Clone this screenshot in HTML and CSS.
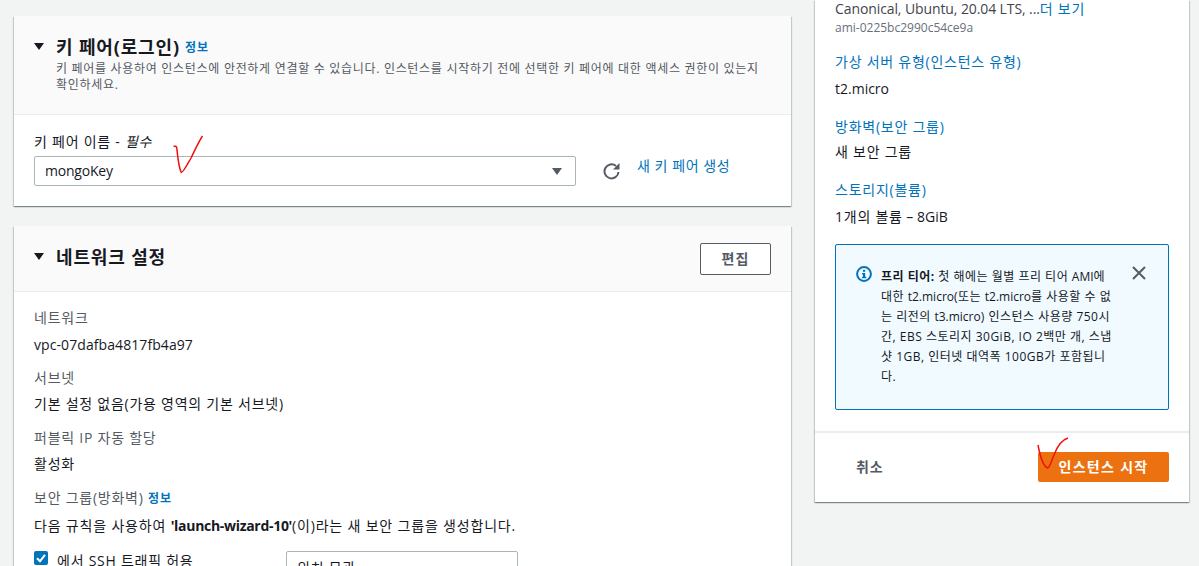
FILE: index.html
```html
<!DOCTYPE html>
<html lang="ko">
<head>
<meta charset="utf-8">
<title>인스턴스 시작</title>
<link rel="stylesheet" href="styles.css">
</head>
<body>
<div class="page">
  <main class="main">
    <section class="card">
      <header class="card-head keypair-head">
        <div class="title-row">
          <span class="caret"></span>
          <h2 class="title">키 페어(로그인)</h2>
          <a class="info">정보</a>
        </div>
        <p class="desc">키 페어를 사용하여 인스턴스에 안전하게 연결할 수 있습니다. 인스턴스를 시작하기 전에 선택한 키 페어에 대한 액세스 권한이 있는지 확인하세요.</p>
      </header>
      <div class="keypair-body">
        <div class="label ko">키 페어 이름 - <i>필수</i></div>
        <div class="select-row">
          <div class="select key-select"><span class="key-name">mongoKey</span><span class="select-arrow"></span></div>
          <svg class="refresh" width="18" height="18" viewBox="0 0 18 18"><path d="M15.5 10A7 7 0 1 1 13 4" fill="none" stroke="#545b64" stroke-width="2"/><path d="M16.500 1V7.500H10Z" fill="#545b64"/></svg>
          <a class="create-link">새 키 페어 생성</a>
        </div>
      </div>
    </section>
    <section class="card">
      <header class="card-head network-head">
        <div class="title-row network-title">
          <span class="caret"></span>
          <h2 class="title">네트워크 설정</h2>
        </div>
        <button class="edit-btn">편집</button>
      </header>
      <div class="network-body">
        <div class="field"><div class="field-label ko">네트워크</div><div class="field-value">vpc-07dafba4817fb4a97</div></div>
        <div class="field"><div class="field-label ko">서브넷</div><div class="field-value ko">기본 설정 없음(가용 영역의 기본 서브넷)</div></div>
        <div class="field"><div class="field-label ko">퍼블릭 IP 자동 할당</div><div class="field-value ko">활성화</div></div>
        <div class="field"><div class="field-label ko">보안 그룹(방화벽) <a class="info">정보</a></div><div class="field-value rule-text">다음 규칙을 사용하여 <b class="wizard">'launch-wizard-10'</b>(이)라는 새 보안 그룹을 생성합니다.</div></div>
        <div class="ssh-row">
          <label class="ssh-check">
            <svg class="checkbox" width="14" height="14" viewBox="0 0 14 14"><rect width="14" height="14" rx="2" fill="#0073bb"/><path d="M3 7.2 6 10.2 11 3.800" fill="none" stroke="#fff" stroke-width="2"/></svg>
            <span class="ko">에서 SSH 트래픽 허용</span>
          </label>
          <div class="select ssh-select"><span class="ko">위치 무관</span></div>
        </div>
      </div>
    </section>
  </main>
  <aside class="summary">
    <div class="summary-body">
      <div class="ami-name"><span class="ami-text">Canonical, Ubuntu, 20.04 LTS, ...</span><a class="ko">더 보기</a></div>
      <div class="ami-id">ami-0225bc2990c54ce9a</div>
      <a class="sum-label first ko">가상 서버 유형(인스턴스 유형)</a>
      <div class="sum-value">t2.micro</div>
      <a class="sum-label ko">방화벽(보안 그룹)</a>
      <div class="sum-value tight ko">새 보안 그룹</div>
      <a class="sum-label ko">스토리지(볼륨)</a>
      <div class="sum-value"><span class="ko">1개의 볼륨</span> – 8GiB</div>
      <div class="notice">
        <svg class="notice-icon" width="16" height="16" viewBox="0 0 16 16"><circle cx="8" cy="8" r="6.9" fill="none" stroke="#0073bb" stroke-width="2"/><rect x="7" y="7" width="2.200" height="5" fill="#0073bb"/><rect x="6" y="7" width="2" height="1.400" fill="#0073bb"/><rect x="6" y="10.800" width="4.200" height="1.400" fill="#0073bb"/><rect x="7" y="3.800" width="2.200" height="2" fill="#0073bb"/></svg>
        <p class="notice-text"><b>프리 티어:</b> 첫 해에는 월별 프리 티어 <span class="lat">AMI</span>에<br>대한 <span class="lat">t2.micro</span>(또는 <span class="lat">t2.micro</span>를 사용할 수 없<br>는 리전의 <span class="lat">t3.micro</span>) 인스턴스 사용량 750시<br>간, EBS 스토리지 30GiB, IO 2백만 개, 스냅<br>샷 1GB, 인터넷 대역폭 100GB가 포함됩니<br>다.</p>
        <svg class="notice-close" width="14" height="14" viewBox="0 0 14 14"><path d="M1 1 13 13M13 1 1 13" stroke="#545b64" stroke-width="2" fill="none"/></svg>
      </div>
    </div>
    <footer class="summary-foot">
      <a class="cancel ko">취소</a>
      <button class="launch">인스턴스 시작</button>
    </footer>
  </aside>
  <svg class="mark mark-one" width="34" height="44" viewBox="0 0 34 44"><path d="M0.500 11.500C2 10.800 3.500 11 3.800 13C4.500 20 5.500 32 8.300 37.500C10 38 14 30 18 23C22 15 26 6 29.500 1" fill="none" stroke="#f01010" stroke-width="1.500"/></svg>
  <svg class="mark mark-two" width="34" height="34" viewBox="0 0 34 34"><path d="M1 8C2.500 16 6 29 10.500 31C13 31 14 25 17 18C20 10 24 3 31 1" fill="none" stroke="#f01010" stroke-width="1.500"/></svg>
</div>
</body>
</html>
```
FILE: styles.css
```css
* { box-sizing: border-box; }
html, body { margin: 0; height: 100%; overflow: hidden; }
body {
  background: #f2f3f3;
  color: #16191f;
  font-family: "Open Sans", "Noto Sans CJK KR", sans-serif;
  font-size: 14px;
  line-height: 20px;
}
a { color: #0073bb; }
.ko { letter-spacing: .75px; }
.lat { letter-spacing: 0; }
.page {
  position: relative;
  display: grid;
  grid-template-columns: 777px 374px;
  column-gap: 24px;
  align-items: start;
  padding: 0 10px 0 14px;
  height: 566px;
  overflow: hidden;
}
.main { display: flex; flex-direction: column; gap: 20px; padding-top: 16px; }
.card {
  background: #fff;
  box-shadow: 0 1px 1px 0 rgba(0, 28, 36, .3), 1px 1px 1px 0 rgba(0, 28, 36, .15), -1px 1px 1px 0 rgba(0, 28, 36, .15);
}
.card-head { background: #fafafa; border-bottom: 1px solid #eaeded; }
.keypair-head { height: 99px; padding: 19px 20px 0; }
.network-head {
  height: 66px;
  padding: 0 20px;
  display: flex;
  align-items: center;
  justify-content: space-between;
}
.title-row { display: flex; align-items: center; }
.network-title { margin-top: -4px; }
.caret {
  width: 0;
  height: 0;
  margin-right: 12px;
  border-left: 5px solid transparent;
  border-right: 5px solid transparent;
  border-top: 7px solid #16191f;
}
.title { margin: 0; font-size: 18px; line-height: 22px; font-weight: 700; letter-spacing: .85px; }
.info { font-size: 12px; font-weight: 700; letter-spacing: 1px; }
.title-row .info { margin-left: 5px; margin-top: 3px; }
.desc {
  margin: 3px 0 0 22px;
  max-width: 706px;
  font-size: 12px;
  line-height: 16px;
  color: #545b64;
  letter-spacing: .7px;
  word-break: keep-all;
}
.keypair-body { height: 91px; padding: 17px 20px 0; }
.label { line-height: 20px; }
.select-row { display: flex; align-items: center; margin-top: 4px; }
.select {
  background: #fff;
  border: 1px solid #aab7b8;
  border-radius: 2px;
  padding: 0 10px;
  display: flex;
  align-items: center;
  justify-content: space-between;
}
.key-select { width: 542px; height: 30px; }
.key-name { letter-spacing: -.2px; }
.select-arrow {
  width: 0;
  height: 0;
  border-left: 5px solid transparent;
  border-right: 5px solid transparent;
  border-top: 7px solid #545b64;
  margin-right: 3px;
}
.refresh { margin: 0 17px 0 27px; }
.create-link { margin: -11px 0 0 -1px; letter-spacing: .55px; }
.edit-btn {
  width: 71px;
  height: 32px;
  background: #fff;
  border: 1px solid #545b64;
  border-radius: 2px;
  color: #545b64;
  font: 700 14px/20px "Open Sans", "Noto Sans CJK KR", sans-serif;
  letter-spacing: 1px;
}
.network-body { padding: 16px 20px 0; height: 400px; }
.field { margin-bottom: 13px; }
.field-label { color: #545b64; line-height: 20px; }
.field-value { line-height: 20px; margin-top: 7px; letter-spacing: .08px; }
.field-value.ko { letter-spacing: .75px; margin-top: 6px; padding-bottom: 1px; }
.field-value.rule-text { letter-spacing: .82px; }
.wizard { letter-spacing: -.3px; }
.field-label .info { letter-spacing: 1px; }
.ssh-row { display: flex; align-items: flex-start; margin-top: 15px; }
.ssh-check { display: flex; align-items: flex-start; width: 252px; }
.checkbox { margin: 0 9px 0 0; flex: none; }
.ssh-select { width: 232px; height: 30px; padding-top: 4px; }
.summary {
  background: #fff;
  box-shadow: 0 1px 1px 0 rgba(0, 28, 36, .3), 1px 1px 1px 0 rgba(0, 28, 36, .15), -1px 1px 1px 0 rgba(0, 28, 36, .15);
}
.summary-body { padding: 0 20px 21px; }
.ami-name { line-height: 18px; height: 17px; color: #3f454d; }
.ami-text { letter-spacing: -.1px; }
.ami-id { font-size: 12px; line-height: 16px; margin-top: 3px; color: #687078; }
.sum-label { display: block; margin-top: 18px; line-height: 20px; }
.sum-label.first { margin-top: 16px; }
.sum-value { margin-top: 7px; line-height: 20px; }
.sum-value.tight { margin-top: 5px; }
.notice {
  display: flex;
  align-items: flex-start;
  height: 166px;
  margin-top: 17px;
  padding: 21px 22px 0 20px;
  background: #f1faff;
  border: 1px solid #0073bb;
  border-radius: 2px;
}
.notice-icon { flex: none; }
.notice-text { flex: 1; margin: 1px 0 0 9px; font-size: 12px; line-height: 20px; color: #16191f; letter-spacing: .5px; white-space: nowrap; }
.notice-close { flex: none; margin-top: 0; }
.summary-foot {
  height: 71px;
  border-top: 2px solid #eaeded;
  display: flex;
  align-items: center;
  justify-content: space-between;
  padding: 0 20px 1px 41px;
}
.cancel { color: #545b64; font-weight: 700; margin-top: -1px; }
.launch {
  width: 131px;
  height: 30px;
  background: #ec7211;
  border: 0;
  border-radius: 2px;
  color: #fff;
  font: 700 14px/20px "Open Sans", "Noto Sans CJK KR", sans-serif;
  letter-spacing: 1.3px;
}
.mark { position: absolute; }
.mark-one { left: 173px; top: 135px; }
.mark-two { left: 1037px; top: 437px; }
```
